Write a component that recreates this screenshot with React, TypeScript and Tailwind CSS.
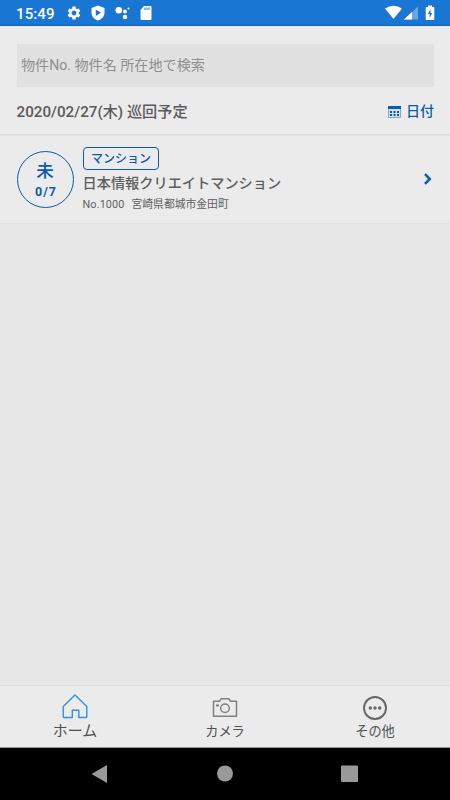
import type { ReactNode } from "react";
import { MdSettings } from "react-icons/md";

function StatusBar() {
  return (
    <header className="flex h-[26px] shrink-0 items-center justify-between border-b border-[#0f65bd] bg-[#1976d3] pt-px pr-[15px] pl-4 text-white">
      <div className="flex items-center">
        <span className="w-[50px] pt-[2px] text-[15px] leading-none font-medium tracking-[0.1px] whitespace-nowrap">15:49</span>
        <MdSettings className="size-4" />
        <svg className="ml-[9px] h-4 w-[14px]" viewBox="0 0 14 16" fill="currentColor">
          <path fillRule="evenodd" d="M7 .5 13.5 3v4.500C13.500 11.500 10.800 14.300 7 15.600 3.200 14.300.5 11.500.5 7.500V3ZM4.800 4.500v6.500L10 7.700Z" />
        </svg>
        <svg className="ml-[10px] h-4 w-[15px]" viewBox="0 0 15 16" fill="currentColor">
          <circle cx="3.800" cy="5.200" r="3.300" />
          <circle cx="10" cy="6.500" r="2" />
          <circle cx="13.500" cy="3.500" r="1" />
          <circle cx="10" cy="12" r="2.200" />
        </svg>
        <svg className="ml-[10px] h-4 w-3" viewBox="0 0 12 16" fill="currentColor">
          <path fillRule="evenodd" d="M4 1h6.500q1 0 1 1V14q0 1-1 1h-9q-1 0-1-1V5ZM4.500 2.500v2.500h1V2.500Zm2 0v2.500h1V2.500Zm2 0v2.500h1V2.500Z" />
        </svg>
      </div>
      <div className="flex items-center">
        <svg className="h-4 w-[17px]" viewBox="0 0 17 16" fill="currentColor">
          <path d="M0 3.500Q8.500-2 17 3.500L8.500 14Z" />
        </svg>
        <svg className="ml-[2px] h-4 w-[14px]" viewBox="0 0 14 16" fill="currentColor">
          <path opacity=".35" d="M0 14.500 14 1.500V14.500Z" />
          <path d="M0 14.500 8 7V14.500Z" />
        </svg>
        <svg className="ml-[7px] h-4 w-[10px]" viewBox="0 0 10 16" fill="currentColor">
          <path fillRule="evenodd" d="M3 .5h4V2h1.500q.8 0 .8 1v11q0 1-.8 1h-7q-.8 0-.8-1V3q0-1 .8-1H3ZM5.500 4 2.800 9h1.800v4l2.700-5H5.500Z" />
        </svg>
      </div>
    </header>
  );
}

function CalendarIcon() {
  return (
    <svg className="h-3 w-[13px]" viewBox="0 0 13 12">
      <path d="M.5.5h12v11H.5Z" fill="#d3dfea" stroke="#7fa8d0" />
      <path d="M0 0h13v3H0Z" fill="#0b5cad" />
      <path d="M2 5h2v2H2Zm3.500 0h2v2h-2ZM9 5h2v2H9ZM2 8h2v2H2Zm3.500 0h2v2h-2ZM9 8h2v2H9Z" fill="#0b5cad" />
    </svg>
  );
}

function PropertyRow() {
  return (
    <section className="flex h-[90px] shrink-0 items-center border-t border-b border-t-[#d9d9d9] border-b-[#e1e1e1] bg-[#ebebeb] px-4 shadow-[inset_0_1px_0_#e4e4e4]">
      <div className="ml-[0.500px] flex size-[57px] flex-col items-center rounded-full border border-[#0b5ab0] pt-[9px] font-medium text-[#0b5ab0]">
        <span className="text-[17.500px] leading-[20px]">未</span>
        <span className="pl-[2px] text-[12.500px] leading-[21px] font-bold tracking-[1px]">0/7</span>
      </div>
      <div className="mt-[3px] ml-[9px] flex flex-col items-start">
        <span className="flex h-[23px] w-[76px] items-center justify-center rounded-[4px] border border-[#0b5ab0] text-[12px] font-medium text-[#0b5ab0]">
          <span className="pt-px pl-px">マンション</span>
        </span>
        <h2 className="mt-[2px] text-[14.200px] leading-[22px] font-medium text-[#5e5e5e]">日本情報クリエイトマンション</h2>
        <p className="mt-px flex gap-[7px] text-[10.800px] leading-[19px] text-[#606060]">
          <span className="tracking-[0.150px]">No.1000</span>
          <span>宮崎県都城市金田町</span>
        </p>
      </div>
      <svg className="mr-[2px] ml-auto h-3 w-2" viewBox="0 0 8 12" fill="none" stroke="#0b5cad" strokeWidth="2.500">
        <path d="m1 1.200 4.800 4.800L1 10.800" />
      </svg>
    </section>
  );
}

function Tab({ children }: { children: ReactNode }) {
  return <button className="flex flex-1 flex-col items-center text-[#505050]">{children}</button>;
}

export default function App() {
  return (
    <div className="flex h-[800px] w-[450px] flex-col overflow-hidden bg-[#e7e7e7] font-['Roboto','Noto_Sans_CJK_JP',sans-serif]">
      <StatusBar />
      <div className="h-[108px] shrink-0 bg-[#ebebeb] px-4 pt-[18px]">
        <div className="ml-px flex h-[43px] items-center bg-[#e1e1e1] pt-px pl-1 text-[14.100px] text-[#8e8e8e]">
          物件No. 物件名 所在地で検索
        </div>
        <div className="flex h-[49px] items-center justify-between pt-[2px] pl-[0.500px]">
          <h1 className="text-[15.200px] font-medium text-[#5a5a5a]">2020/02/27(木) 巡回予定</h1>
          <button className="flex items-center gap-[5px] pb-[2px] text-[14px] font-medium text-[#0b5cad]">
            <CalendarIcon />
            日付
          </button>
        </div>
      </div>
      <PropertyRow />
      <main className="flex-1" />
      <nav className="flex h-[63px] shrink-0 border-t border-b border-t-[#dedede] border-b-[#999] bg-[#ebebeb]">
        <Tab>
          <svg className="mt-[8px] h-[25px] w-[26px]" viewBox="0 0 26 25" fill="none" stroke="#2f91df" strokeWidth="1.400" strokeLinejoin="round">
            <path d="M1.200 12.500 13 1l11.800 11.500v10.300q0 .7-.7.7h-7.300v-7.300h-6.500v7.300H1.900q-.7 0-.7-.7Z" />
          </svg>
          <span className="mt-px text-[15px] leading-[23px]">ホーム</span>
        </Tab>
        <Tab>
          <svg className="mt-[12px] h-5 w-[26px]" viewBox="0 0 26 20" fill="none" stroke="#808080" strokeWidth="1.500" strokeLinejoin="round">
            <path d="M1.500 3.300h6L9 .8h8l1.500 2.500h6v15h-23Z" />
            <circle cx="13" cy="10.300" r="4.300" />
            <path d="M4 7.500h3" strokeWidth="2" />
          </svg>
          <span className="mt-[3px] text-[13.200px] leading-[22px]">カメラ</span>
        </Tab>
        <Tab>
          <svg className="mt-[10px] size-6" viewBox="0 0 24 24">
            <circle cx="12" cy="12" r="11" fill="none" stroke="#666" strokeWidth="1.900" />
            <g fill="#666">
              <circle cx="7.300" cy="12" r="1.700" />
              <circle cx="12" cy="12" r="1.700" />
              <circle cx="16.700" cy="12" r="1.700" />
            </g>
          </svg>
          <span className="mt-px text-[13.200px] leading-[22px]">その他</span>
        </Tab>
      </nav>
      <footer className="flex h-[52px] shrink-0 bg-black">
        <svg className="h-[52px] w-full" viewBox="0 0 450 52" fill="#999">
          <path d="M107 17v18L91.500 26Z" />
          <circle cx="225" cy="25.500" r="8" />
          <rect x="341" y="17.500" width="17" height="16.500" rx="1" />
        </svg>
      </footer>
    </div>
  );
}
